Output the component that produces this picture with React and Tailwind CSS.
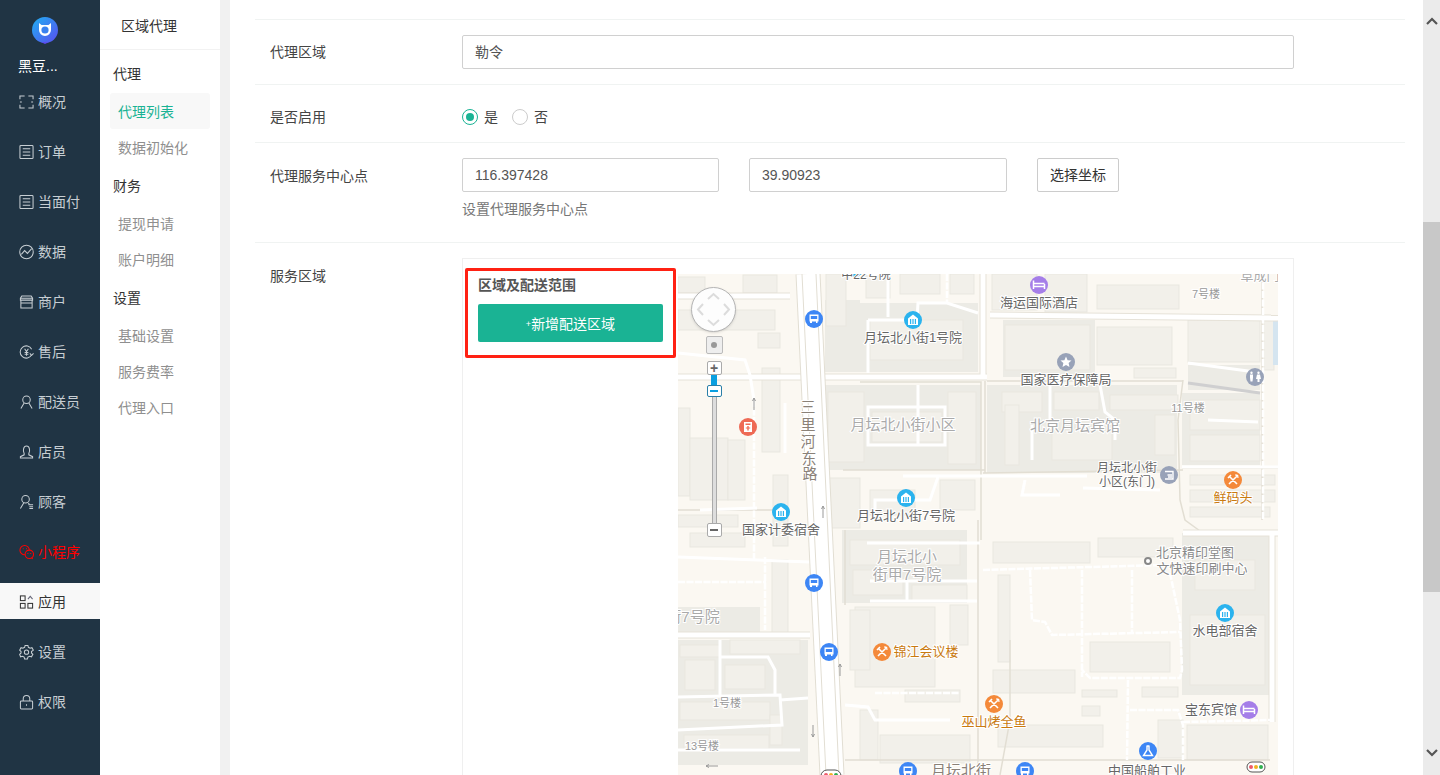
import { Fragment } from 'react';

const navItems = [
  { label: '概况', icon: 'scan' },
  { label: '订单', icon: 'list' },
  { label: '当面付', icon: 'list' },
  { label: '数据', icon: 'chart' },
  { label: '商户', icon: 'store' },
  { label: '售后', icon: 'refund' },
  { label: '配送员', icon: 'user' },
  { label: '店员', icon: 'clerk' },
  { label: '顾客', icon: 'customer' },
  { label: '小程序', icon: 'wechat', red: true },
  { label: '应用', icon: 'apps', active: true },
  { label: '设置', icon: 'gear' },
  { label: '权限', icon: 'lock' },
];

const subGroups = [
  { title: '代理', items: ['代理列表', '数据初始化'] },
  { title: '财务', items: ['提现申请', '账户明细'] },
  { title: '设置', items: ['基础设置', '服务费率', '代理入口'] },
];

function NavIcon({ name }) {
  const common = { width: 15, height: 16, viewBox: '0 0 16 16', fill: 'none', stroke: 'currentColor', strokeWidth: 1.1 };
  if (name === 'scan') return <svg {...common}><path d="M1 5V1.500h5M10 1.500h5V5M1 11v3.500h5M10 14.500h5V11M1 8h2M13 8h2" /></svg>;
  if (name === 'list') return <svg {...common}><rect x="1" y="1" width="14" height="14" rx="1" /><path d="M4 4.500h8M4 8h8M4 11.500h8" /></svg>;
  if (name === 'chart') return <svg {...common}><circle cx="8" cy="8" r="7.200" /><path d="M2.500 10.500 6 6.500l3 3 4.500-5" /></svg>;
  if (name === 'store') return <svg {...common}><path d="M3 1.500h10l1.500 2.500v2h-13V4zM1.500 4h13M2 6v8.500h12V6M2 9h12" /></svg>;
  if (name === 'refund') return <svg {...common}><path d="M13.500 11A6.500 6.500 0 1 1 13.500 5M11.500 9.500l2 2 2-2" /><path d="M6 4.500l2 3 2-3M8 7.500V12M6 8.500h4M6 10.300h4" /></svg>;
  if (name === 'user') return <svg {...common}><circle cx="8" cy="5.500" r="4" /><path d="M5.500 9 2 15M10.500 9l3.500 6" /></svg>;
  if (name === 'clerk') return <svg {...common}><path d="M5.500 9.500C4 7 4.500 1.500 8 1.500s4 5.500 2.500 8v1.500l4 2v1.500h-13V13l4-2z" /></svg>;
  if (name === 'customer') return <svg {...common}><circle cx="7" cy="5" r="4" /><path d="M5 9 1.500 15M10 9l1 1.500M10 11h5M11 13h4M11 15h4" /></svg>;
  if (name === 'wechat') return <svg {...common}><circle cx="6" cy="6" r="5" /><circle cx="11" cy="10.500" r="4.500" fill="#203444" /><path d="M4 4.500h1M7.500 4.500h1M9 9.500h1M12 9.500h1M13.500 14l1 1.500" /></svg>;
  if (name === 'apps') return <svg {...common} stroke="#333"><rect x="1.500" y="1.500" width="5" height="5" /><rect x="1.500" y="9.500" width="5" height="5" /><rect x="9.500" y="9.500" width="5" height="5" /><path d="M9.500 5 12 2l2.500 3" stroke="#667" /></svg>;
  if (name === 'gear') return <svg {...common}><path d="M6.500 1h3l.5 2 1.800 1 2-.6 1.500 2.600L13.300 7.500v1.500l1.500 1.500-1.500 2.600-2-.6-1.800 1-.5 2h-3l-.5-2-1.800-1-2 .6L.7 10.500 2.200 9V7.500L.7 6l1.500-2.600 2 .6L6 3z" /><circle cx="8" cy="8.200" r="2.300" /></svg>;
  if (name === 'lock') return <svg {...common}><rect x="1.500" y="7" width="13" height="8.500" rx="1" /><path d="M4.500 7V4.500a3.500 3.500 0 0 1 7 0V7M8 10.500v1.500" /></svg>;
  return null;
}

function Logo() {
  return (
    <svg width="26" height="27" viewBox="0 0 26 27">
      <defs>
        <linearGradient id="logoFill" x1="0" y1="0" x2="1" y2="1">
          <stop offset="0" stopColor="#1fb0f2" />
          <stop offset="1" stopColor="#5a4df0" />
        </linearGradient>
      </defs>
      <circle cx="13" cy="13" r="13" fill="url(#logoFill)" />
      <path d="M9 25h8l-4 2z" fill="#5a4df0" />
      <path d="M7 6l2.500 2h7L19 6v7a6 6 0 0 1-12 0z" fill="#fff" />
      <circle cx="13" cy="13" r="3.600" fill="#3a82ef" />
    </svg>
  );
}

function Sidebar() {
  return (
    <div className="w-[100px] shrink-0 bg-[#203444] text-[#c7ced3]">
      <div className="h-[83px] flex flex-col">
        <div className="h-[57px] pt-[17px] flex justify-center pr-[10px]"><Logo /></div>
        <div className="pl-[18px] text-white text-[14px] leading-[18px]">黑豆...</div>
      </div>
      {navItems.map((n) => (
        <div
          key={n.label}
          className={`h-[36px] mb-[14px] pl-[19px] pt-[2px] flex items-center gap-[4px] text-[14px] ${n.active ? 'bg-[#f8f8f8] text-[#333]' : n.red ? 'text-[#ff0000]' : ''}`}
        >
          <NavIcon name={n.icon} />
          <span>{n.label}</span>
        </div>
      ))}
    </div>
  );
}

function SubMenu() {
  return (
    <div className="w-[120px] shrink-0 bg-white">
      <div className="h-[50px] pl-[21px] pt-[3px] flex items-center border-b border-[#f2f2f2] text-[14px] text-[#333]">区域代理</div>
      <div className="px-[10px] pt-[6px]">
        {subGroups.map((g) => (
          <Fragment key={g.title}>
            <div className="h-[36px] pl-[3px] mb-px flex items-center text-[14px] text-[#333]">{g.title}</div>
            {g.items.map((item) => (
              <div
                key={item}
                className={`h-[36px] pl-[8px] pt-[2px] flex items-center text-[14px] rounded-[3px] ${item === '代理列表' ? 'bg-[#f8f8f8] text-[#1ab394]' : 'text-[#8f8f8f]'}`}
              >
                {item}
              </div>
            ))}
            <div className="h-[3px]" />
          </Fragment>
        ))}
      </div>
    </div>
  );
}

function TextInput({ value, className }) {
  return (
    <div className={`h-[34px] px-[12px] flex items-center border border-[#d0d0d0] rounded-[2px] text-[14px] text-[#555] ${className}`}>{value}</div>
  );
}

// everything below is in page coordinates, the svg viewBox starts at 678,274
const blocks = [
  [860, 303, 118, 69], [825, 300, 35, 72], [1003, 320, 92, 57], [825, 385, 156, 85], [987, 385, 190, 88], [1182, 393, 78, 72],
  [842, 530, 125, 73], [678, 640, 130, 125], [1182, 533, 88, 162], [678, 607, 82, 25], [1188, 365, 72, 25],
];

const buildings = [
  [678, 277, 27, 16], [743, 275, 34, 18], [678, 310, 97, 20], [758, 333, 22, 15], [762, 368, 18, 84], [678, 408, 12, 88], [690, 438, 38, 62],
  [728, 440, 17, 60], [773, 475, 15, 71], [678, 515, 60, 12], [690, 533, 55, 14], [772, 560, 16, 75],
  [826, 274, 20, 52], [870, 320, 93, 40], [866, 274, 24, 24], [900, 274, 40, 20], [950, 274, 24, 20], [992, 274, 45, 36], [1045, 274, 42, 38],
  [1097, 285, 82, 24], [1005, 325, 85, 45], [1097, 327, 75, 38], [1134, 368, 42, 10], [1188, 320, 72, 42], [1264, 320, 10, 50],
  [828, 392, 36, 70], [872, 412, 70, 30], [948, 392, 28, 72], [1002, 392, 40, 20], [1005, 405, 14, 60], [1054, 392, 45, 18], [1110, 395, 68, 15],
  [1052, 430, 60, 30], [1155, 415, 20, 40], [1190, 400, 70, 30], [1190, 435, 70, 26], [1190, 475, 85, 10], [1190, 490, 85, 12], [1190, 507, 80, 10],
  [825, 478, 35, 50], [870, 490, 45, 25], [940, 480, 35, 30], [850, 540, 110, 25], [853, 570, 50, 25], [912, 585, 55, 16],
  [855, 607, 80, 80], [850, 610, 20, 60], [950, 605, 18, 40], [905, 690, 55, 12], [860, 710, 18, 50], [880, 735, 90, 28],
  [993, 542, 97, 21], [1098, 538, 75, 19], [998, 575, 12, 87], [993, 670, 82, 23], [1090, 642, 80, 30], [1082, 690, 35, 7], [1142, 687, 36, 10],
  [998, 725, 105, 22], [1082, 706, 18, 10], [1158, 720, 25, 38], [1187, 725, 81, 35], [1195, 560, 60, 30], [1190, 615, 75, 70],
  [985, 473, 0, 0], [680, 645, 40, 12], [730, 640, 70, 14], [685, 660, 30, 30], [725, 665, 40, 24], [680, 702, 90, 18], [684, 735, 85, 14], [770, 715, 12, 30],
];

const roads = [
  'M678 377H987', 'M983 274V377', 'M678 635H810', 'M678 296H790', 'M1183 533H1278', 'M1272 533V722', 'M990 315 1278 318',
];

const edges = [
  'M987 381H1183', 'M985 381V473', 'M860 382H981V540', 'M980 380V380', 'M983 473 1183 470', 'M1183 380 1178 420 1180 500 1185 520 1200 531',
  'M978 520V775', 'M843 470H985', 'M845 530V605', 'M678 510H775', 'M1182 468H1278', 'M845 760H1270', 'M1000 775 1010 720V640', 'M1262 274V520',
];

const lanes = [
  'M868 407H945V445H868ZM918 385V445', 'M868 320H917L918 303H947L978 313', 'M868 320V373', 'M888 274V317',
  'M1050 385V420', 'M1100 385 1105 412 1115 420V440', 'M1032 425V460', 'M903 476H1087', 'M938 477 930 500H875V520',
  'M1208 420 1258 422', 'M1083 488 1160 490', 'M1025 480 1022 495H1060', 'M1188 363 1263 373', 'M1182 467H1278',
  'M867 543H980', 'M870 581H977', 'M870 601H977', 'M907 581V601', 'M678 557 810 562', 'M785 403V453', 'M700 510 757 508',
  'M720 640V695', 'M720 657H768L775 670V695', 'M678 697 780 695 782 725 678 730', 'M780 700 808 698', 'M678 750H800',
  'M845 705 868 707 875 720H950', 'M678 353 745 360 750 375 754 400',
];

const dashes = [
  'M947 274V303', 'M754 400V560', 'M678 582H766', 'M765 557V630', 'M875 693H960', 'M1263 274V520',
  'M983 570 1160 565', 'M1030 570 1032 620 1045 622 1052 635 1180 632', 'M1082 570V677', 'M1132 570V632',
  'M1170 573 1180 620 1182 670 1180 678H1090L1082 670', 'M1128 680 1127 760', 'M1130 710H1178L1183 725V760', 'M1183 722 1270 720',
];

const labels = [
  { x: 866, y: 279, t: '中22号院', s: 12 },
  { x: 1039, y: 307, t: '海运国际酒店', s: 13 },
  { x: 913, y: 342, t: '月坛北小街1号院', s: 13 },
  { x: 1066, y: 384, t: '国家医疗保障局', s: 13 },
  { x: 903, y: 430, t: '月坛北小街小区', s: 15, c: '#aaa' },
  { x: 1075, y: 431, t: '北京月坛宾馆', s: 15, c: '#aaa' },
  { x: 1127, y: 472, t: '月坛北小街', s: 12 },
  { x: 1127, y: 486, t: '小区(东门)', s: 12 },
  { x: 1233, y: 502, t: '鲜码头', s: 13, c: '#c97a10' },
  { x: 906, y: 520, t: '月坛北小街7号院', s: 13 },
  { x: 781, y: 534, t: '国家计委宿舍', s: 13 },
  { x: 907, y: 562, t: '月坛北小', s: 15, c: '#aaa' },
  { x: 907, y: 580, t: '街甲7号院', s: 15, c: '#aaa' },
  { x: 1195, y: 557, t: '北京精印堂图', s: 13, c: '#888' },
  { x: 1202, y: 573, t: '文快速印刷中心', s: 13, c: '#888' },
  { x: 1225, y: 635, t: '水电部宿舍', s: 13 },
  { x: 693, y: 622, t: '街7号院', s: 15, c: '#aaa' },
  { x: 926, y: 656, t: '锦江会议楼', s: 13, c: '#c97a10' },
  { x: 994, y: 726, t: '巫山烤全鱼', s: 13, c: '#c97a10' },
  { x: 1211, y: 714, t: '宝东宾馆', s: 13 },
  { x: 727, y: 707, t: '1号楼', s: 11, c: '#999' },
  { x: 702, y: 750, t: '13号楼', s: 11, c: '#999' },
  { x: 1206, y: 298, t: '7号楼', s: 11, c: '#999' },
  { x: 1188, y: 412, t: '11号楼', s: 11, c: '#999' },
  { x: 1147, y: 775, t: '中国船舶工业', s: 13 },
  { x: 961, y: 776, t: '月坛北街', s: 15, c: '#8a8178' },
  { x: 1260, y: 280, t: '阜成门', s: 13, c: '#aaa' },
];

function Pin({ x, y, color, kind }) {
  return (
    <g transform={`translate(${x} ${y})`}>
      <circle r="9" fill={color} />
      {kind === 'bus' && <path d="M-4.500-4.500h9v7h-1v1.500h-1.500V2.500h-4V4H-4V2.500h-.500zM-3.200-3V0h6.400V-3z" fill="#fff" fillRule="evenodd" />}
      {kind === 'bank' && <path d="M0-5.500 5 -1.500V5h-10V-1.500zM-3-1V4h1.200V-1zM-.600-1V4H.600V-1zM1.800-1V4H3V-1z" fill="#fff" fillRule="evenodd" />}
      {kind === 'hotel' && <path d="M-5.500-4.500V4M5.500-1V4M-5.500 1.500H5.500M-5.500-1.500H5.500" stroke="#fff" strokeWidth="1.500" fill="none" />}
      {kind === 'food' && <path d="M-4-4 4 4M4-4-4 4M-5-2-2-5M2-2 5-5M2.500-5.500 5.500-2.500" stroke="#fff" strokeWidth="1.600" fill="none" />}
      {kind === 'star' && <path d="M0-5.500 1.600-1.800 5.500-1.500 2.600 1 3.500 5 0 2.900-3.500 5-2.600 1-5.500-1.500-1.600-1.800z" fill="#fff" />}
      {kind === 'wc' && <path d="M-3.500-5.500a1.200 1.200 0 1 1 0 2.400 1.200 1.200 0 1 1 0-2.400zM3.500-5.500a1.200 1.200 0 1 1 0 2.400 1.200 1.200 0 1 1 0-2.400zM-5-2.500h3v3l-.5 4h-2l-.5-4zM2-2.500h3l1 4.500h-1.500V5h-2V2H1z" fill="#fff" />}
      {kind === 'exit' && <path d="M-4-3.500H4V4H-4M-1.500 0H3M-1 2H3" stroke="#fff" strokeWidth="1.400" fill="none" />}
      {kind === 'toilet' && <path d="M-4-5H4V5H-4zM-2.500-3.500V-2H2.500V-3.500zM-.700-1V.500H-2.200V1.500H-.700V3.500H.700V1.500H2.200V.500H.700V-1z" fill="#fff" fillRule="evenodd" />}
      {kind === 'lab' && <path d="M-1.500-5h3M-1-5V-1L-4.500 4.500h9L1-1V-5" stroke="#fff" strokeWidth="1.400" fill="none" />}
    </g>
  );
}

const pins = [
  { x: 855, y: 268, color: '#2bb3ee', kind: 'bank' },
  { x: 814, y: 319, color: '#3d86f5', kind: 'bus' },
  { x: 913, y: 320, color: '#2bb3ee', kind: 'bank' },
  { x: 1039, y: 285, color: '#a57ee8', kind: 'hotel' },
  { x: 1066, y: 362, color: '#98a2b8', kind: 'star' },
  { x: 1255, y: 377, color: '#98a2b8', kind: 'wc' },
  { x: 748, y: 427, color: '#ee6a55', kind: 'toilet' },
  { x: 1169, y: 475, color: '#98a2b8', kind: 'exit' },
  { x: 1233, y: 480, color: '#f4893a', kind: 'food' },
  { x: 906, y: 498, color: '#2bb3ee', kind: 'bank' },
  { x: 781, y: 512, color: '#2bb3ee', kind: 'bank' },
  { x: 814, y: 583, color: '#3d86f5', kind: 'bus' },
  { x: 1225, y: 613, color: '#2bb3ee', kind: 'bank' },
  { x: 829, y: 652, color: '#3d86f5', kind: 'bus' },
  { x: 882, y: 652, color: '#f4893a', kind: 'food' },
  { x: 994, y: 704, color: '#f4893a', kind: 'food' },
  { x: 1249, y: 710, color: '#a57ee8', kind: 'hotel' },
  { x: 1148, y: 751, color: '#3d86f5', kind: 'lab' },
  { x: 908, y: 771, color: '#3d86f5', kind: 'bus' },
  { x: 1025, y: 771, color: '#3d86f5', kind: 'bus' },
];

const roadName = [['三', 808, 412], ['里', 808, 430], ['河', 808, 447], ['东', 809, 464], ['路', 810, 479]];

function MapDrawing() {
  return (
    <svg width="600" height="501" viewBox="678 274 600 501" className="block">
      <rect x="678" y="274" width="600" height="501" fill="#fbf8f2" />
      {blocks.map(([x, y, w, h]) => <rect key={`${x}-${y}`} x={x} y={y} width={w} height={h} fill="#ecebe5" />)}
      {buildings.map(([x, y, w, h]) => <rect key={`${x}-${y}`} x={x} y={y} width={w} height={h} fill="#f2f0ea" stroke="#e9e7e0" />)}
      <rect x="1273" y="320" width="5" height="45" fill="#d5e5f0" />
      {edges.map((d) => <path key={d} d={d} stroke="#e2ded3" strokeWidth="1.500" fill="none" />)}
      {roads.map((d) => <path key={`e${d}`} d={d} stroke="#e6e2d8" strokeWidth="7" fill="none" />)}
      {roads.map((d) => <path key={d} d={d} stroke="#fff" strokeWidth="5" fill="none" />)}
      {lanes.map((d) => <path key={d} d={d} stroke="#fff" strokeWidth="3" fill="none" />)}
      {dashes.map((d) => <path key={d} d={d} stroke="#fff" strokeWidth="2.500" strokeDasharray="7 1.500" fill="none" />)}
      <path d="M1188 383 1260 393" stroke="#cfcfd0" strokeWidth="3" fill="none" />
      <path d="M808 274 832 775" stroke="#e2ded3" strokeWidth="25" fill="none" />
      <path d="M808 274 832 775" stroke="#fff" strokeWidth="23" fill="none" />
      <path d="M802 274 826 775M816 274 839 775" stroke="#e2ded3" strokeWidth="1" fill="none" />
      <path d="M754 410v-12m-1.500 3 1.500-3 1.500 3M823 518v-12m-1.500 3 1.500-3 1.500 3M840 676v-12m-1.500 3 1.500-3 1.500 3M813 725v12m-1.500-3 1.500 3 1.500-3M718 766h-12m3-1.500-3 1.500 3 1.500" stroke="#999" strokeWidth="1" fill="none" />
      {roadName.map(([t, x, y]) => (
        <text key={t} x={x} y={y} textAnchor="middle" fontSize="15" fill="#8a8178" stroke="#fff" strokeWidth="2" paintOrder="stroke">{t}</text>
      ))}
      {pins.map((p) => <Pin key={`${p.x}-${p.y}`} {...p} />)}
      <circle cx="1148" cy="561" r="3" fill="#fff" stroke="#888" strokeWidth="2" />
      {labels.map((l) => (
        <text key={l.t} x={l.x} y={l.y} textAnchor="middle" fontSize={l.s} fill={l.c || '#666'} stroke="#fff" strokeWidth="2" paintOrder="stroke">{l.t}</text>
      ))}
      <rect x="821" y="770" width="20" height="12" rx="6" fill="#fff" stroke="#555" />
      <circle cx="826" cy="775" r="2" fill="#ee5a6a" />
      <circle cx="831" cy="775" r="2" fill="#f0b020" />
      <circle cx="836" cy="775" r="2" fill="#30b050" />
      <rect x="1247" y="762" width="18" height="10" rx="5" fill="#fff" stroke="#555" />
      <circle cx="1251" cy="767" r="2" fill="#ee5a6a" />
      <circle cx="1256" cy="767" r="2" fill="#f0b020" />
      <circle cx="1261" cy="767" r="2" fill="#30b050" />
    </svg>
  );
}

function MapControls() {
  return (
    <div className="absolute left-[12px] top-[13px] w-[46px] flex flex-col items-center">
      <div className="w-[45px] h-[45px] rounded-full bg-[#fdfdfd] border border-[#b5b5b5] shadow-sm">
        <svg width="43" height="43" viewBox="0 0 43 43" fill="none" stroke="#dcdcdc" strokeWidth="2">
          <path d="M16 11l5.500-5 5.500 5M16 32l5.500 5 5.500-5M11 16l-5 5.500 5 5.500M32 16l5 5.500-5 5.500" />
        </svg>
      </div>
      <div className="mt-[4px] ml-[2px] w-[17px] h-[18px] flex items-center justify-center rounded-[2px] bg-[#eee] border border-[#bbb]">
        <span className="w-[6px] h-[6px] rounded-full bg-[#999]" />
      </div>
      <div className="mt-[7px] ml-[2px] w-[15px] h-[14px] flex items-center justify-center bg-white border border-[#aaa] rounded-[2px] text-[#666] text-[14px] leading-none font-bold">+</div>
      <div className="ml-[2px] w-[6px] h-[10px] bg-[#0a9fe0]" />
      <div className="ml-[2px] w-[15px] h-[12px] flex items-center justify-center bg-white border border-[#2a7fa8] rounded-[2px]">
        <span className="w-[8px] h-[2px] bg-[#0a9fe0]" />
      </div>
      <div className="ml-[2px] w-[5px] h-[126px] bg-[#ddd] border-x border-[#aaa]" />
      <div className="ml-[2px] w-[15px] h-[14px] flex items-center justify-center bg-white border border-[#aaa] rounded-[2px]">
        <span className="w-[8px] h-[2px] bg-[#666]" />
      </div>
    </div>
  );
}

function Row({ label, className, children }) {
  return (
    <div className={`flex border-b border-[#f0f3f2] ${className}`}>
      <div className="w-[207px] pl-[15px] shrink-0 text-[14px] text-[#444]">{label}</div>
      {children}
    </div>
  );
}

function Scrollbar() {
  return (
    <div className="w-[17px] shrink-0 h-full bg-[#efefef] flex flex-col items-center">
      <div className="h-[222px] w-full pt-[17px] flex justify-center bg-[#ebebeb]">
        <svg width="12" height="9" viewBox="0 0 12 9" fill="none" stroke="#555" strokeWidth="2.200"><path d="M1 7l5-5 5 5" /></svg>
      </div>
      <div className="h-[370px] w-full bg-[#c8c8c8]" />
      <div className="flex-1 w-full flex justify-center pt-[156px] bg-[#ebebeb]">
        <svg width="12" height="9" viewBox="0 0 12 9" fill="none" stroke="#555" strokeWidth="2.200"><path d="M1 2l5 5 5-5" /></svg>
      </div>
    </div>
  );
}

export default function App() {
  return (
    <div className="h-screen overflow-hidden flex bg-[#f1f1f1] font-['Liberation_Sans','Noto_Sans_CJK_SC',sans-serif]">
      <Sidebar />
      <SubMenu />
      <div className="ml-[10px] flex-1 bg-white overflow-hidden pl-[25px] pr-[18px]">
        <div className="h-[20px] border-b border-[#f0f3f2]" />
        <Row label="代理区域" className="h-[65px] pt-[15px] leading-[35px]">
          <TextInput value="勒令" className="w-[832px]" />
        </Row>
        <Row label="是否启用" className="h-[58px] items-center pt-[7px]">
          <div className="flex items-center text-[14px] text-[#444]">
            <span className="w-[16px] h-[16px] rounded-full border border-[#1ab394] flex items-center justify-center">
              <span className="w-[8px] h-[8px] rounded-full bg-[#1ab394]" />
            </span>
            <span className="ml-[6px]">是</span>
            <span className="ml-[14px] w-[16px] h-[16px] rounded-full border border-[#ccc]" />
            <span className="ml-[6px]">否</span>
          </div>
        </Row>
        <Row label="代理服务中心点" className="h-[100px] pt-[15px] leading-[36px]">
          <div>
            <div className="flex">
              <TextInput value="116.397428" className="w-[257px]" />
              <TextInput value="39.90923" className="ml-[30px] w-[258px]" />
              <div className="ml-[30px] w-[82px] h-[34px] flex items-center justify-center border border-[#ccc] rounded-[2px] text-[14px] text-[#333]">选择坐标</div>
            </div>
            <div className="mt-[7px] text-[14px] leading-[20px] text-[#777]">设置代理服务中心点</div>
          </div>
        </Row>
        <div className="flex pt-[15px]">
          <div className="w-[207px] pl-[15px] pt-[8px] shrink-0 text-[14px] text-[#444] leading-[20px]">服务区域</div>
          <div className="relative w-[832px] h-[560px] border border-[#efefef] pt-[15px] pl-[15px] flex">
            <div className="w-[185px] shrink-0">
              <div className="h-[22px] leading-[22px] text-[14px] font-bold text-[#555]">区域及配送范围</div>
              <div className="mt-[8px] h-[38px] pt-[2px] bg-[#1ab394] rounded-[2px] flex items-center justify-center text-white text-[14px]">
                <span className="text-[9px] mt-[2px]">+</span>新增配送区域
              </div>
            </div>
            <div className="absolute left-[2px] top-[9px] w-[211px] h-[90px] border-[3px] border-[#ff2113] rounded-[2px]" />
            <div className="relative ml-[15px]">
              <MapDrawing />
              <MapControls />
            </div>
          </div>
        </div>
      </div>
      <Scrollbar />
    </div>
  );
}
